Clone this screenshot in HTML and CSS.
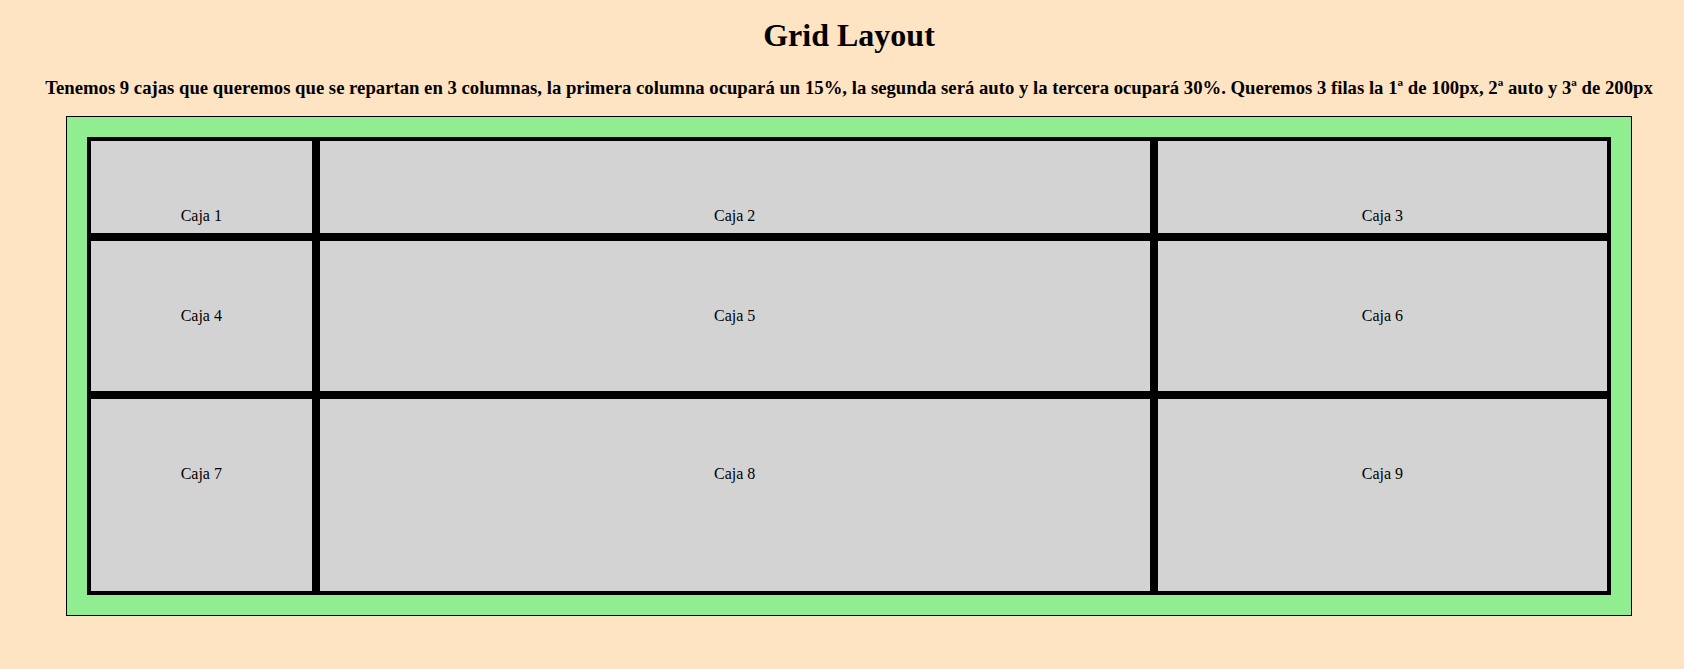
FILE: index.html
```html
<!DOCTYPE html>
<html lang="es">
<head>
<meta charset="utf-8">
<title>Grid Layout</title>
<link rel="stylesheet" href="styles.css">
</head>
<body>
<header class="header">
  <h1 class="title">Grid Layout</h1>
  <h3 class="subtitle">Tenemos 9 cajas que queremos que se repartan en 3 columnas, la primera columna ocupará un 15%, la segunda será auto y la tercera ocupará 30%. Queremos 3 filas la 1ª de 100px, 2ª auto y 3ª de 200px</h3>
</header>
<div class="container">
  <div class="grid">
    <div class="cell">Caja 1</div>
    <div class="cell">Caja 2</div>
    <div class="cell">Caja 3</div>
    <div class="cell">Caja 4</div>
    <div class="cell">Caja 5</div>
    <div class="cell">Caja 6</div>
    <div class="cell">Caja 7</div>
    <div class="cell">Caja 8</div>
    <div class="cell">Caja 9</div>
  </div>
</div>
</body>
</html>
```
FILE: styles.css
```css
html, body {
  margin: 0;
  padding: 0;
}
body {
  background: #ffe4c4;
  font-family: "Liberation Serif", "Times New Roman", serif;
  color: #000;
  font-size: 16px;
}
.header {
  padding: 17px 0 0 14px;
}
.title {
  font-size: 32px;
  font-weight: bold;
  text-align: center;
  margin: 0;
  line-height: 37px;
}
.subtitle {
  font-size: 18.72px;
  font-weight: bold;
  text-align: center;
  margin: 23px 0 0;
  line-height: 22px;
}
.container {
  box-sizing: border-box;
  width: 1566px;
  margin: 17px 0 0 66px;
  border: 1px solid #000;
  background: #90ee90;
  padding: 20px;
}
.grid {
  display: grid;
  grid-template-columns: 15% auto 30%;
  grid-template-rows: 100px 158px 200px;
}
.cell {
  box-sizing: border-box;
  background: #d3d3d3;
  border: 4px solid #000;
  padding-top: 66px;
  text-align: center;
  line-height: 18px;
}
```
